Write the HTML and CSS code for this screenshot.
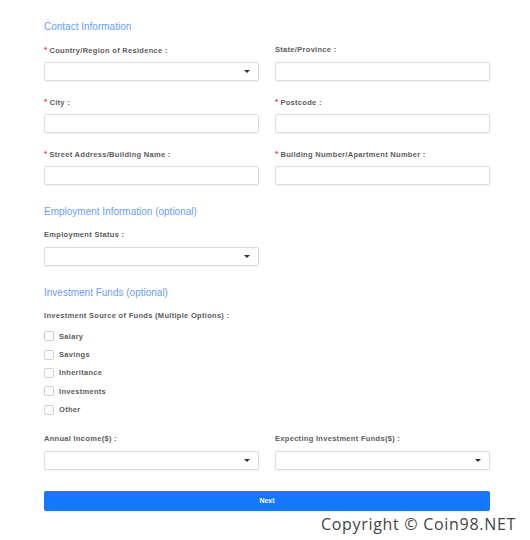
FILE: index.html
```html
<!DOCTYPE html>
<html lang="en">
<head>
    <meta charset="UTF-8">
    <meta name="viewport" content="width=device-width, initial-scale=1.0">
    <title>Contact Information</title>
    <link rel="stylesheet" href="styles.css">
</head>
<body>
    <div class="form">
        <h2 class="section-title">Contact Information</h2>
        <div class="row">
            <div class="field">
                <label class="required">Country/Region of Residence :</label>
                <div class="input select"><span class="arrow"></span></div>
            </div>
            <div class="field">
                <label>State/Province :</label>
                <div class="input"></div>
            </div>
        </div>
        <div class="row">
            <div class="field">
                <label class="required">City :</label>
                <div class="input"></div>
            </div>
            <div class="field">
                <label class="required">Postcode :</label>
                <div class="input"></div>
            </div>
        </div>
        <div class="row">
            <div class="field">
                <label class="required">Street Address/Building Name :</label>
                <div class="input"></div>
            </div>
            <div class="field">
                <label class="required">Building Number/Apartment Number :</label>
                <div class="input"></div>
            </div>
        </div>

        <h2 class="section-title">Employment Information (optional)</h2>
        <div class="row">
            <div class="field">
                <label>Employment Status :</label>
                <div class="input select"><span class="arrow"></span></div>
            </div>
        </div>

        <h2 class="section-title">Investment Funds (optional)</h2>
        <label class="group-label">Investment Source of Funds (Multiple Options) :</label>
        <ul class="checks">
            <li><span class="box"></span>Salary</li>
            <li><span class="box"></span>Savings</li>
            <li><span class="box"></span>Inheritance</li>
            <li><span class="box"></span>Investments</li>
            <li><span class="box"></span>Other</li>
        </ul>
        <div class="row">
            <div class="field">
                <label>Annual Income($) :</label>
                <div class="input select"><span class="arrow"></span></div>
            </div>
            <div class="field">
                <label>Expecting Investment Funds($) :</label>
                <div class="input select"><span class="arrow"></span></div>
            </div>
        </div>

        <button class="next">Next</button>
    </div>
    <p class="copyright">Copyright © Coin98.NET</p>
</body>
</html>
```

FILE: styles.css
```css
body {
    margin: 0;
    background: #fff;
    font-family: "Liberation Sans", Arial, sans-serif;
}
.form {
    width: 446px;
    padding: 20px 0 0 44px;
}
.section-title {
    margin: 20px 0 10px;
    font-size: 10px;
    line-height: 14px;
    font-weight: normal;
    color: #6a9dfb;
}
.section-title:first-child {
    margin-top: 0;
}
.row {
    display: grid;
    grid-template-columns: 1fr 1fr;
    gap: 16px;
    margin-bottom: 15px;
}
.field label,
.group-label {
    display: block;
    height: 11px;
    font-size: 7.5px;
    line-height: 11px;
    font-weight: bold;
    color: #5c5c5c;
    letter-spacing: 0.3px;
}
.field label {
    margin-bottom: 7px;
}
.required::before {
    content: "*";
    color: #f5222d;
    margin-right: 2px;
    font-size: 8px;
    vertical-align: 1px;
}
.input {
    height: 17px;
    border: 1px solid #dcdcdc;
    border-radius: 2px;
    box-shadow: 0 1px 2px rgba(0, 0, 0, 0.06);
    position: relative;
}
.arrow {
    position: absolute;
    right: 8px;
    top: 7px;
    border-left: 3px solid transparent;
    border-right: 3px solid transparent;
    border-top: 3px solid #333;
}
.checks {
    list-style: none;
    margin: 6px 0 14px;
    padding: 0;
}
.checks li {
    display: flex;
    align-items: center;
    height: 18.4px;
    font-size: 7.5px;
    font-weight: bold;
    color: #5c5c5c;
    letter-spacing: 0.3px;
}
.box {
    width: 8px;
    height: 8px;
    border: 1px solid #d0d0d0;
    border-radius: 2px;
    margin-right: 5px;
}
.next {
    display: block;
    width: 100%;
    height: 20px;
    margin-top: 21px;
    border: none;
    border-radius: 2px;
    background: #1677ff;
    color: #fff;
    font-family: "Liberation Sans", Arial, sans-serif;
    font-size: 7px;
    font-weight: bold;
}
.copyright {
    margin: 3px 14px 0 0;
    text-align: right;
    font-family: "Open Sans", sans-serif;
    font-size: 16px;
    line-height: 20px;
    letter-spacing: 0.7px;
    color: #444;
}
```
